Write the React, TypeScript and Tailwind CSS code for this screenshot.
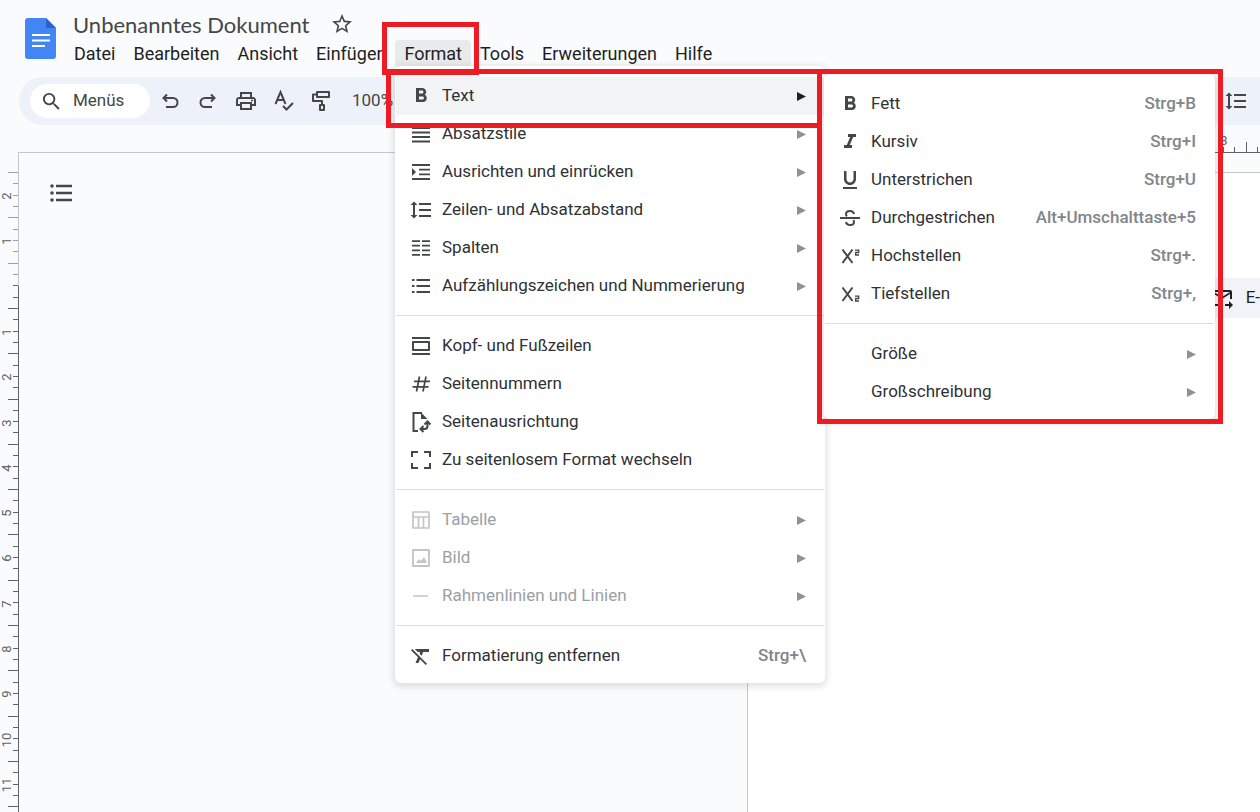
import type { ReactNode } from 'react'
import {
  MdFormatBold, MdFormatItalic, MdFormatUnderlined, MdFormatLineSpacing,
  MdFormatClear, MdSearch, MdStarBorder, MdOutlinePrint, MdOutlineForwardToInbox,
} from 'react-icons/md'

interface Item {
  label: string
  icon?: ReactNode
  hint?: string
  sub?: boolean
  active?: boolean
  disabled?: boolean
}

function Svg({ children }: { children: ReactNode }) {
  return (
    <svg width="24" height="24" viewBox="0 0 24 24" fill="none" stroke="currentColor" strokeWidth="2" aria-hidden="true">
      {children}
    </svg>
  )
}

const ParagraphIcon = () => <Svg><path d="M3 6h18M3 10.500h18M3 15h18M3 19.500h18" strokeWidth="1.800" /></Svg>
const IndentIcon = () => (
  <Svg>
    <path d="M3 5h18M10 9.700h11M10 14.300h11M3 19h18" strokeWidth="1.800" />
    <path d="M3 8v8l4-4z" fill="currentColor" stroke="none" />
  </Svg>
)
const ColumnsIcon = () => <Svg><path d="M3 5.200h8M3 9.700h8M3 14.300h8M3 18.800h8M13 5.200h8M13 9.700h8M13 14.300h8M13 18.800h8" strokeWidth="1.800" /></Svg>
const BulletsIcon = () => <Svg><path d="M7.500 6H21M7.500 12H21M7.500 18H21M3 6h2.500M3 12h2.500M3 18h2.500" strokeWidth="1.900" /></Svg>
const HeaderIcon = () => <Svg><path d="M3 4h18M3 20h18M4 8h16v8H4z" strokeLinejoin="round" /></Svg>
const HashIcon = () => <Svg><path d="M5 9.300h16M3.500 14.800h16M10.500 4.500l-3 15M17 4.500l-3 15" strokeWidth="1.700" /></Svg>
const DashedIcon = () => <Svg><path d="M3 9V4h6M15 4h6v5M21 15v5h-6M9 20H3v-5" /></Svg>
const TableIcon = () => <Svg><path d="M4 4h16v16H4zM4 9h16M9.500 9v11M14.500 9v11" strokeWidth="1.700" strokeLinejoin="round" /></Svg>
const ImageIcon = () => (
  <Svg>
    <path d="M4 4h16v16H4z" strokeWidth="1.800" strokeLinejoin="round" />
    <path d="m7 17 3-4 2 2 3-4 3 6z" fill="currentColor" stroke="none" />
  </Svg>
)
const DashIcon = () => <Svg><path d="M4 12h15" strokeWidth="1.500" /></Svg>
const OrientationIcon = () => (
  <Svg>
    <path d="M9 21H4.500V3H13" />
    <path d="M12 2.500 18.500 9H12z" fill="currentColor" stroke="none" />
    <path d="M18.500 12.500V16q0 3-3 3H12M15.500 14.500l3-3 3 3M14.500 16l-3 3 3 3" />
  </Svg>
)
const StrikeIcon = () => (
  <Svg>
    <path d="M2 12h20" />
    <path d="M16 8c-.4-2-2-3-4-3-2.400 0-4 1.300-4 3 0 1 .4 1.700 1 2.200M8 16c.4 2 2 3 4 3 2.400 0 4-1.300 4-3 0-.8-.2-1.400-.6-2" />
  </Svg>
)
const SuperIcon = () => (
  <Svg>
    <path d="m4.500 5.500 10 13.500M14.500 5.500 4.500 19" />
    <path d="M17 6.200h3.700v2.300h-3V11H21" strokeWidth="1.300" />
  </Svg>
)
const SubIcon = () => (
  <Svg>
    <path d="m4.500 5.500 10 13.500M14.500 5.500 4.500 19" />
    <path d="M17 14.200h3.700v2.300h-3V19H21" strokeWidth="1.300" />
  </Svg>
)

const FORMAT_MENU: Item[][] = [
  [
    { label: 'Text', icon: <MdFormatBold />, sub: true, active: true },
    { label: 'Absatzstile', icon: <ParagraphIcon />, sub: true },
    { label: 'Ausrichten und einrücken', icon: <IndentIcon />, sub: true },
    { label: 'Zeilen- und Absatzabstand', icon: <MdFormatLineSpacing />, sub: true },
    { label: 'Spalten', icon: <ColumnsIcon />, sub: true },
    { label: 'Aufzählungszeichen und Nummerierung', icon: <BulletsIcon />, sub: true },
  ],
  [
    { label: 'Kopf- und Fußzeilen', icon: <HeaderIcon /> },
    { label: 'Seitennummern', icon: <HashIcon /> },
    { label: 'Seitenausrichtung', icon: <OrientationIcon /> },
    { label: 'Zu seitenlosem Format wechseln', icon: <DashedIcon /> },
  ],
  [
    { label: 'Tabelle', icon: <TableIcon />, sub: true, disabled: true },
    { label: 'Bild', icon: <ImageIcon />, sub: true, disabled: true },
    { label: 'Rahmenlinien und Linien', icon: <DashIcon />, sub: true, disabled: true },
  ],
  [{ label: 'Formatierung entfernen', icon: <MdFormatClear />, hint: 'Strg+\\' }],
]

const TEXT_MENU: Item[][] = [
  [
    { label: 'Fett', icon: <MdFormatBold />, hint: 'Strg+B' },
    { label: 'Kursiv', icon: <MdFormatItalic />, hint: 'Strg+I' },
    { label: 'Unterstrichen', icon: <MdFormatUnderlined />, hint: 'Strg+U' },
    { label: 'Durchgestrichen', icon: <StrikeIcon />, hint: 'Alt+Umschalttaste+5' },
    { label: 'Hochstellen', icon: <SuperIcon />, hint: 'Strg+.' },
    { label: 'Tiefstellen', icon: <SubIcon />, hint: 'Strg+,' },
  ],
  [
    { label: 'Größe', sub: true },
    { label: 'Großschreibung', sub: true },
  ],
]

const MENUS = ['Datei', 'Bearbeiten', 'Ansicht', 'Einfügen', 'Format', 'Tools', 'Erweiterungen', 'Hilfe']

function Menu({ groups, label }: { groups: Item[][]; label: string }) {
  return (
    <div role="menu" aria-label={label} className="rounded-md bg-white px-px shadow-[0_2px_6px_2px_rgba(60,64,67,0.15)]">
      {groups.map((group, g) => (
        <div key={g} className={`pt-[11px] pb-[10px] last:pb-2 ${g > 0 ? 'border-t border-[#dadce0]' : ''}`}>
          {group.map(item => (
            <button
              key={item.label}
              role="menuitem"
              disabled={item.disabled}
              className={`flex h-[38px] w-full items-center gap-[9px] pr-[18px] pl-[13px] text-left text-[17px] ${item.active ? 'bg-[#f1f3f4]' : ''} ${item.disabled ? 'text-[#9aa0a6]' : 'text-[#303134]'}`}
            >
              <span className={`flex size-6 shrink-0 items-center justify-center text-[24px] ${item.disabled ? 'text-[#c4c4c4]' : 'text-[#444746]'}`}>{item.icon}</span>
              <span className="grow whitespace-nowrap">{item.label}</span>
              {item.hint && <span className="font-medium text-[#80868b]">{item.hint}</span>}
              {item.sub && (
                <svg width="10" height="9" viewBox="0 0 10 9" className={item.active ? 'text-[#202124]' : 'text-[#8f9194]'} aria-hidden="true">
                  <path d="M1 0 10 4.500 1 9z" fill="currentColor" />
                </svg>
              )}
            </button>
          ))}
        </div>
      ))}
    </div>
  )
}

function VerticalRuler() {
  const ticks = Array.from({ length: 57 }, (_, i) => i)
  return (
    <svg width="19" height="660" viewBox="0 0 19 660" className="shrink-0" aria-hidden="true">
      <path d="M18.500 0v134" stroke="#c4c7c5" />
      <path d="M18.500 134v526" stroke="#5f6368" />
      {ticks.map(i => (
        <path key={i} d={`M${i % 4 === 0 ? 8 : 13} ${Math.round(20 + i * 11.325) + 0.5}H18`} stroke={i < 10 ? '#9aa0a6' : '#5f6368'} />
      ))}
      {[2, 1, 0, 1, 2, 3, 4, 5, 6, 7, 8, 9, 10, 11].map((n, i) => n > 0 && (
        <text key={i} transform={`translate(11 ${Math.round(44 + i * 45.3)}) rotate(-90)`} textAnchor="middle" fontSize="13" fill="#5f6368">{n}</text>
      ))}
    </svg>
  )
}

function HorizontalRuler() {
  return (
    <svg width="513" height="40" viewBox="0 0 513 40" className="-mt-5 shrink-0" aria-hidden="true">
      <path d="M0 20.500h513" stroke="#5f6368" />
      {[0, 1, 2, 3].map(i => (
        <path key={i} d={`M${Math.round(476 + i * 11.325) + 0.5} ${i === 2 ? 10 : 15}V20`} stroke="#5f6368" />
      ))}
      <text x="477" y="13" textAnchor="middle" fontSize="13" fill="#5f6368">3</text>
    </svg>
  )
}

export default function App() {
  return (
    <div className="relative flex h-screen flex-col overflow-hidden bg-[#f9fbfd] font-['Roboto',sans-serif] text-[#444746]">
      <header className="flex items-start pt-[10px] pl-[25px]">
        <svg width="32" height="42" viewBox="0 0 32 42" className="mt-2 shrink-0" aria-label="Docs">
          <path d="M3 0h18l10 10v28q0 3-3 3H3q-3 0-3-3V3q0-3 3-3z" fill="#4285f4" />
          <path d="m21 0 10 10H21z" fill="#2a62d4" />
          <path d="M7 17h18M7 22.500h18M7 28h13" stroke="#fff" strokeWidth="2" />
        </svg>
        <div className="ml-2">
          <div className="flex h-7 items-center gap-5 pl-2">
            <h1 className="font-['Lato',sans-serif] text-[22px]">Unbenanntes Dokument</h1>
            <button aria-label="Markieren" className="text-[24px]"><MdStarBorder /></button>
          </div>
          <nav className="flex h-[30px] items-center">
            {MENUS.map(m => (
              <button key={m} className={`rounded px-[9px] text-[18px] text-[#1f1f1f] ${m === 'Format' ? 'bg-[#e8eaeb]' : ''}`}>{m}</button>
            ))}
          </nav>
        </div>
      </header>

      <div className="mt-[9px] ml-[19px] flex h-12 shrink-0 items-center rounded-l-full bg-[#edf2fa] pl-[11px]">
        <button className="flex h-[34px] w-[120px] items-center gap-[10px] rounded-full bg-white pl-[10px] text-[17px]">
          <MdSearch className="text-[23px]" />Menüs
        </button>
        <div className="ml-2 flex grow items-center gap-[14px]">
          <button aria-label="Rückgängig"><Svg><path d="M9 5.500 5.500 9 9 12.500M5.500 9H15a4.500 4.500 0 0 1 0 9H8" /></Svg></button>
          <button aria-label="Wiederholen"><Svg><path d="M15 5.500 18.500 9 15 12.500M18.500 9H9a4.500 4.500 0 0 0 0 9h7" /></Svg></button>
          <button aria-label="Drucken" className="text-[24px]"><MdOutlinePrint /></button>
          <button aria-label="Rechtschreibung"><Svg><path d="M3.500 15 8.500 3l5 12M5.500 11h6M11 17l3.500 3.500L21 14" /></Svg></button>
          <button aria-label="Format übertragen"><Svg><path d="M7 3h12v5H7zM7 5.500H3V12h9v4M10 16h4v5h-4z" strokeLinejoin="round" /></Svg></button>
          <button className="ml-1 text-[17px]">100%</button>
        </div>
        <button aria-label="Zeilenabstand" className="mr-3 text-[24px]"><MdFormatLineSpacing /></button>
      </div>

      <div className="mt-[27px] flex min-h-0 grow">
        <VerticalRuler />
        <main className="flex grow border-t border-[#c4c7c5]">
          <button aria-label="Gliederung" className="mt-[28px] ml-[30px] h-6 self-start">
            <Svg>
              <path d="M7 5h16M7 12h16M7 19h16" strokeWidth="2.500" />
              <path d="M3 5h.01M3 12h.01M3 19h.01" strokeWidth="3.600" strokeLinecap="round" />
            </Svg>
          </button>
        </main>
        <div className="flex w-[513px] shrink-0 flex-col">
          <HorizontalRuler />
          <div className="flex grow flex-col border-t border-l border-[#c4c7c5] bg-white pt-[105px]">
            <button className="flex h-10 items-center justify-end gap-3 self-end bg-[#f1f3f9] text-[17px] whitespace-nowrap text-[#1f1f1f]">
              <MdOutlineForwardToInbox className="text-[24px]" />E-
            </button>
          </div>
        </div>
      </div>

      <div className="absolute top-[66px] left-[395px] w-[430px]"><Menu groups={FORMAT_MENU} label="Format" /></div>
      <div className="absolute top-[74px] left-[824px] w-[391px]"><Menu groups={TEXT_MENU} label="Text" /></div>

      <div className="pointer-events-none absolute top-[22px] left-[382px] h-[53px] w-[97px] border-5 border-[#ed1c24]" />
      <div className="pointer-events-none absolute top-[69px] left-[386px] h-[59px] w-[436px] border-5 border-[#ed1c24]" />
      <div className="pointer-events-none absolute top-[69px] left-[817px] h-[355px] w-[406px] border-5 border-[#ed1c24]" />
    </div>
  )
}
